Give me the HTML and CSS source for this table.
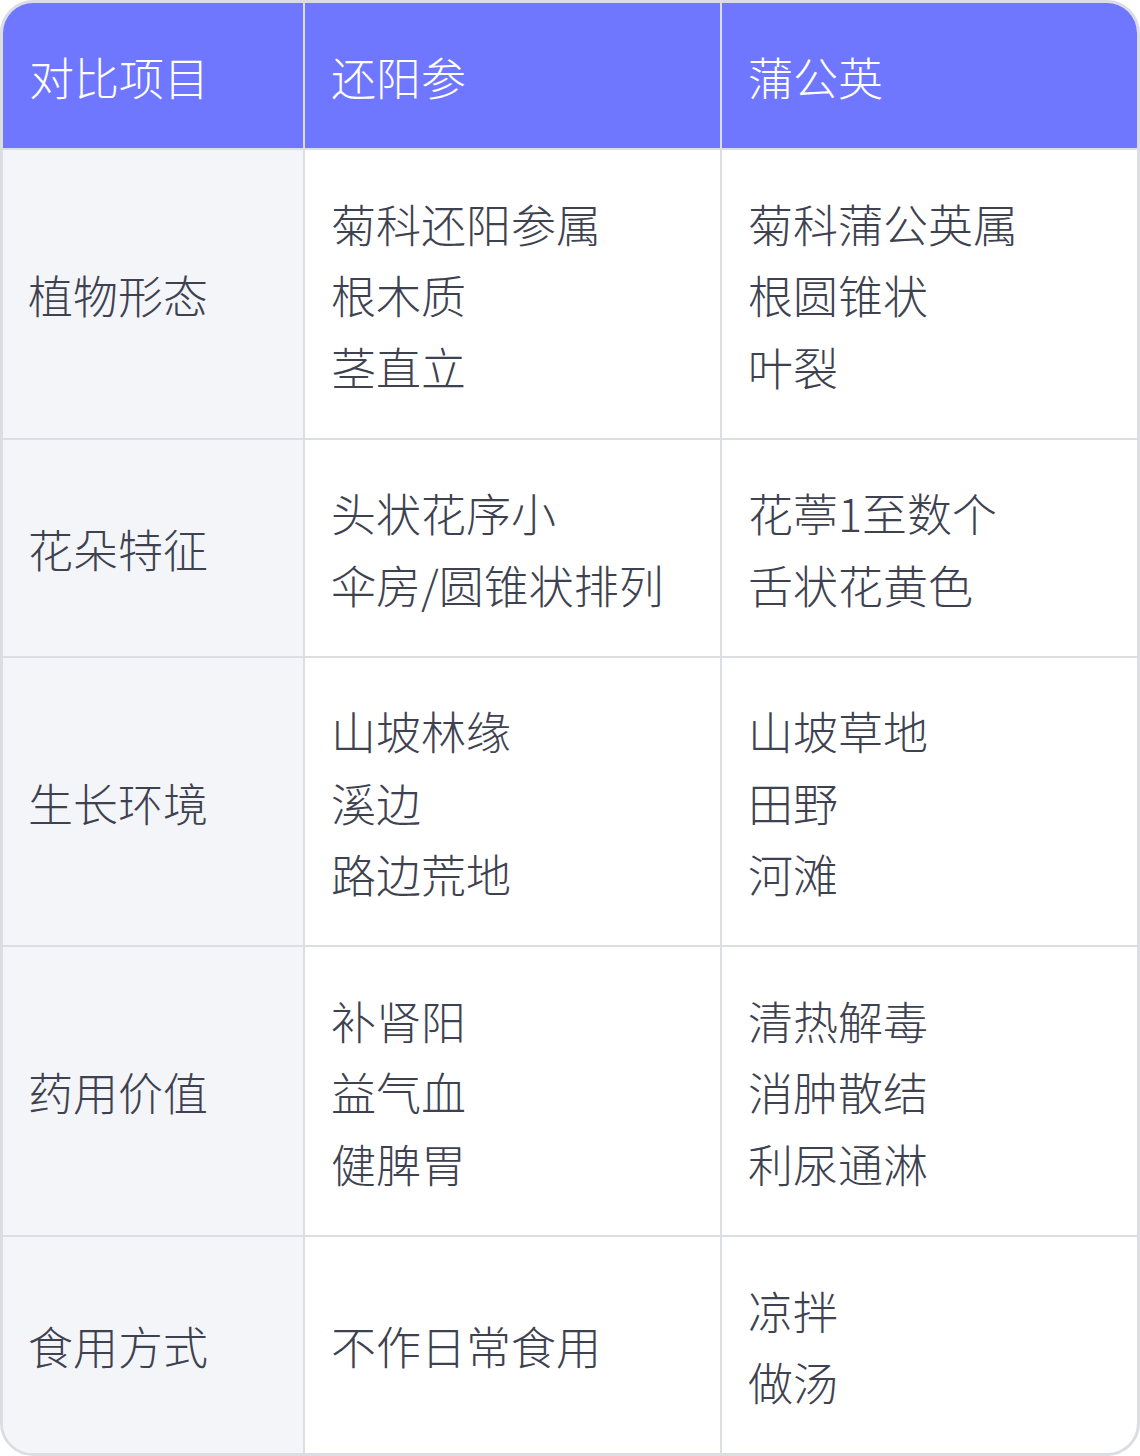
FILE: index.html
```html
<!DOCTYPE html>
<html lang="zh-CN">
<head>
<meta charset="utf-8">
<title>还阳参与蒲公英对比</title>
<link rel="stylesheet" href="styles.css">
</head>
<body>
<div class="card">
  <table class="cmp">
    <colgroup>
      <col class="c1">
      <col class="c2">
      <col class="c3">
    </colgroup>
    <thead>
      <tr>
        <th>对比项目</th>
        <th>还阳参</th>
        <th>蒲公英</th>
      </tr>
    </thead>
    <tbody>
      <tr>
        <td class="label">植物形态</td>
        <td>菊科还阳参属<br>根木质<br>茎直立</td>
        <td>菊科蒲公英属<br>根圆锥状<br>叶裂</td>
      </tr>
      <tr>
        <td class="label">花朵特征</td>
        <td>头状花序小<br>伞房/圆锥状排列</td>
        <td>花葶1至数个<br>舌状花黄色</td>
      </tr>
      <tr>
        <td class="label">生长环境</td>
        <td>山坡林缘<br>溪边<br>路边荒地</td>
        <td>山坡草地<br>田野<br>河滩</td>
      </tr>
      <tr>
        <td class="label">药用价值</td>
        <td>补肾阳<br>益气血<br>健脾胃</td>
        <td>清热解毒<br>消肿散结<br>利尿通淋</td>
      </tr>
      <tr>
        <td class="label">食用方式</td>
        <td>不作日常食用</td>
        <td>凉拌<br>做汤</td>
      </tr>
    </tbody>
  </table>
</div>
</body>
</html>
```
FILE: styles.css
```css
html, body {
  margin: 0;
  padding: 0;
  background: #ffffff;
}
body {
  font-family: "Noto Sans CJK SC", "Noto Sans", sans-serif;
}
.card {
  width: 1140px;
  height: 1456px;
  box-sizing: border-box;
  border: 3px solid #dcdde2;
  border-radius: 33px;
  overflow: hidden;
  background: #ffffff;
}
.cmp {
  width: 100%;
  height: 100%;
  border-collapse: separate;
  border-spacing: 0;
  table-layout: fixed;
}
.c1 { width: 302px; }
.c2 { width: 417px; }
.c3 { width: auto; }
.cmp th,
.cmp td {
  padding: 37px 24px 35px 26px;
  font-size: 45px;
  line-height: 71.5px;
  font-weight: 300;
  text-align: left;
  vertical-align: middle;
  border-right: 2px solid #dcdee3;
  border-bottom: 2px solid #dcdee3;
  color: #3e4250;
}
.cmp th:last-child,
.cmp td:last-child {
  border-right: none;
}
.cmp tbody tr:last-child td {
  border-bottom: none;
}
.cmp th {
  background: #6f76ff;
  color: #ffffff;
  height: 73px;
}
.cmp td.label {
  background: #f4f5f9;
  padding-left: 25px;
}
```
